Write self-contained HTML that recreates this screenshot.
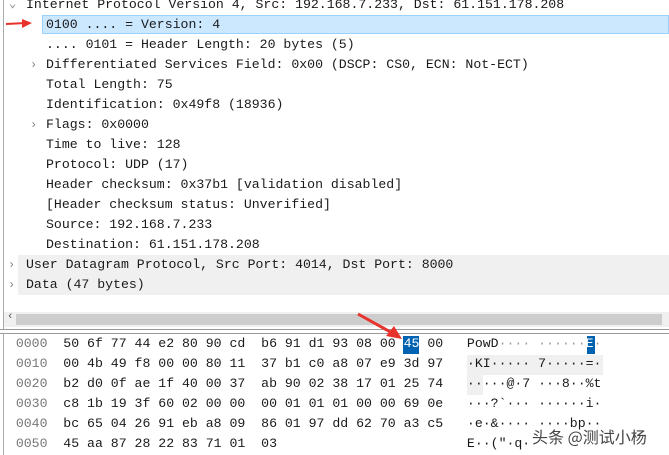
<!DOCTYPE html>
<html><head><style>
body{margin:0;width:669px;height:455px;overflow:hidden;background:#fff;font-family:"Liberation Mono",monospace;font-size:13.2px;color:#1a1a1a;position:relative}
.r{position:absolute;height:20px;line-height:20px;white-space:pre}
.ar{position:absolute;color:#888;font-size:12px}
.hx{position:absolute;left:0;width:669px;height:20px;line-height:20px;white-space:pre}
</style></head><body>
<div style="position:absolute;left:3px;top:0;width:1px;height:330px;background:#aaa"></div>
<div class="ar" style="left:9px;top:-6px;line-height:20px">⌄</div>
<div class="r" style="left:26px;top:-5px">Internet Protocol Version 4, Src: 192.168.7.233, Dst: 61.151.178.208</div>
<div style="position:absolute;left:42px;top:15px;width:627px;height:19px;background:#cce8ff;border:1px solid #99d1ff;box-sizing:border-box"></div>
<div class="r" style="left:46px;top:15px">0100 .... = Version: 4</div>
<svg style="position:absolute;left:4px;top:18px" width="30" height="12"><path d="M2 6 L22 5" stroke="#e8322c" stroke-width="2"/><path d="M18 1 L28 5 L18 10 Z" fill="#e8322c"/></svg>
<div class="r" style="left:46px;top:35px">.... 0101 = Header Length: 20 bytes (5)</div>
<div class="ar" style="left:30px;top:55px;line-height:20px">›</div>
<div class="r" style="left:46px;top:55px">Differentiated Services Field: 0x00 (DSCP: CS0, ECN: Not-ECT)</div>
<div class="r" style="left:46px;top:75px">Total Length: 75</div>
<div class="r" style="left:46px;top:95px">Identification: 0x49f8 (18936)</div>
<div class="ar" style="left:30px;top:115px;line-height:20px">›</div>
<div class="r" style="left:46px;top:115px">Flags: 0x0000</div>
<div class="r" style="left:46px;top:135px">Time to live: 128</div>
<div class="r" style="left:46px;top:155px">Protocol: UDP (17)</div>
<div class="r" style="left:46px;top:175px">Header checksum: 0x37b1 [validation disabled]</div>
<div class="r" style="left:46px;top:195px">[Header checksum status: Unverified]</div>
<div class="r" style="left:46px;top:215px">Source: 192.168.7.233</div>
<div class="r" style="left:46px;top:235px">Destination: 61.151.178.208</div>
<div style="position:absolute;left:18px;top:255px;width:651px;height:40px;background:#f0f0f0"></div>
<div class="ar" style="left:8px;top:255px;line-height:20px">›</div>
<div class="r" style="left:26px;top:255px">User Datagram Protocol, Src Port: 4014, Dst Port: 8000</div>
<div class="ar" style="left:8px;top:275px;line-height:20px">›</div>
<div class="r" style="left:26px;top:275px">Data (47 bytes)</div>
<div style="position:absolute;left:4px;top:312px;width:665px;height:15px;background:#f0f0f0"></div>
<div style="position:absolute;left:16px;top:314px;width:646px;height:11px;background:#cdcdcd"></div>
<div class="ar" style="left:7px;top:311px;font-size:11px;color:#555">‹</div>
<div style="position:absolute;left:0;top:329px;width:669px;height:1px;background:#999"></div>
<div style="position:absolute;left:0;top:333px;width:669px;height:1px;background:#999"></div>
<div style="position:absolute;left:3px;top:333px;width:1px;height:122px;background:#aaa"></div>
<svg style="position:absolute;left:356px;top:312px" width="50" height="28"><path d="M2 2 L38 22" stroke="#e8322c" stroke-width="3"/><path d="M30 24 L46 27 L38 14 Z" fill="#e8322c"/></svg>
<div style="position:absolute;left:467px;top:355px;width:136px;height:20px;background:#f0f0f0"></div>
<div style="position:absolute;left:467px;top:375px;width:16px;height:20px;background:#f0f0f0"></div>
<div style="position:absolute;left:403px;top:336px;width:16px;height:18px;background:#0063b1"></div>
<div style="position:absolute;left:587px;top:336px;width:8px;height:18px;background:#0063b1"></div>
<div class="hx" style="top:334px"><span style="color:#777">  0000</span>  50 6f 77 44 e2 80 90 cd  b6 91 d1 93 08 00 <span style="color:#fff">45</span> 00   PowD<i style="font-style:normal;color:#999">···· ······</i><span style="color:#fff">E</span><i style="font-style:normal;color:#999">·</i></div>
<div class="hx" style="top:354px"><span style="color:#777">  0010</span>  00 4b 49 f8 00 00 80 11  37 b1 c0 a8 07 e9 3d 97   ·KI····· 7·····=·</div>
<div class="hx" style="top:374px"><span style="color:#777">  0020</span>  b2 d0 0f ae 1f 40 00 37  ab 90 02 38 17 01 25 74   ·····@·7 ···8··%t</div>
<div class="hx" style="top:394px"><span style="color:#777">  0030</span>  c8 1b 19 3f 60 02 00 00  00 01 01 01 00 00 69 0e   ···?`··· ······i·</div>
<div class="hx" style="top:414px"><span style="color:#777">  0040</span>  bc 65 04 26 91 eb a8 09  86 01 97 dd 62 70 a3 c5   ·e·&···· ····bp··</div>
<div class="hx" style="top:434px"><span style="color:#777">  0050</span>  45 aa 87 28 22 83 71 01  03                        E··("·q·</div>
<div style="position:absolute;left:532px;top:426px;font-family:'Noto Sans CJK SC',sans-serif;font-size:16px;color:#444;line-height:20px;white-space:nowrap">头条 @测试小杨</div>
</body></html>
